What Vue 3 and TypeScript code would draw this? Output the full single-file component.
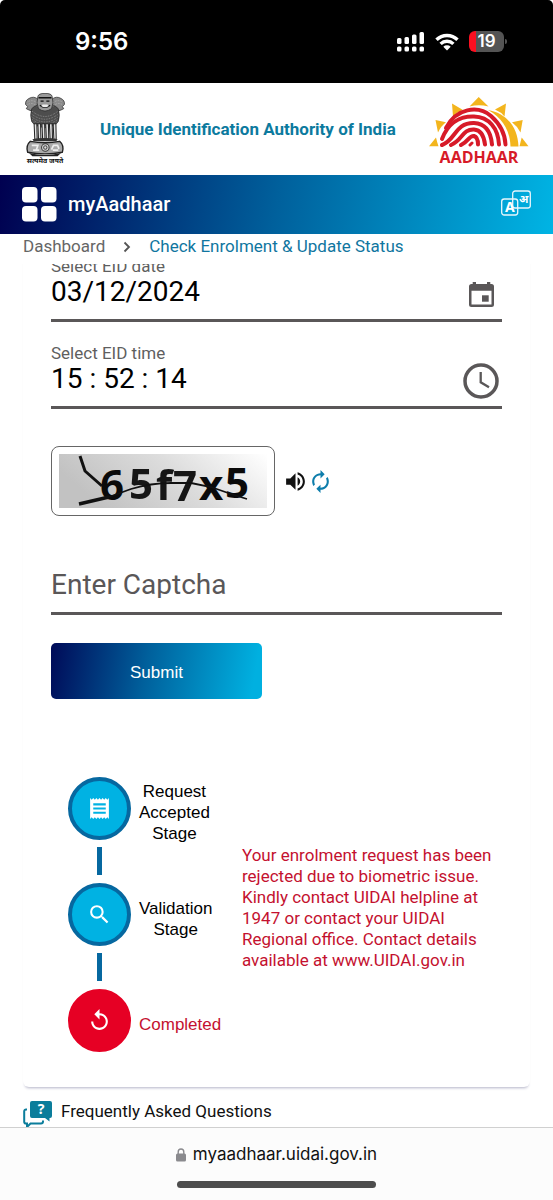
<script setup lang="ts">
import { ref } from 'vue'

interface Stage {
  label: string
  icon: 'receipt' | 'search' | 'replay'
  rejected: boolean
}

const eidDate = ref('03/12/2024')
const eidTime = ref('15 : 52 : 14')
const captcha = ref('')

const stages: Stage[] = [
  { label: 'Request Accepted Stage', icon: 'receipt', rejected: false },
  { label: 'Validation Stage', icon: 'search', rejected: false },
  { label: 'Completed', icon: 'replay', rejected: true },
]

const stagePaths: Record<Stage['icon'], string> = {
  receipt:
    'M18 17H6v-2h12v2zm0-4H6v-2h12v2zm0-4H6V7h12v2zM3 22l1.5-1.5L6 22l1.5-1.5L9 22l1.5-1.5L12 22l1.5-1.5L15 22l1.5-1.5L18 22l1.5-1.5L21 22V2l-1.5 1.5L18 2l-1.5 1.5L15 2l-1.5 1.5L12 2l-1.5 1.5L9 2 7.5 3.5 6 2 4.500 3.500 3 2v20z',
  search:
    'M15.500 14h-.79l-.28-.27A6.471 6.471 0 0 0 16 9.500 6.500 6.500 0 1 0 9.500 16c1.610 0 3.090-.59 4.230-1.570l.27.28v.79l5 4.990L20.490 19l-4.990-5zm-6 0C7.010 14 5 11.990 5 9.500S7.010 5 9.500 5 14 7.010 14 9.500 11.990 14 9.500 14z',
  replay:
    'M12 5V1L7 6l5 5V7c3.310 0 6 2.690 6 6s-2.690 6-6 6-6-2.690-6-6H4c0 4.420 3.580 8 8 8s8-3.580 8-8-3.580-8-8-8z',
}

const captchaGlyphs = [
  { char: '6', x: 41, y: 46, soft: false },
  { char: '5', x: 70, y: 45, soft: true },
  { char: 'f', x: 97, y: 46, soft: true },
  { char: '7', x: 114, y: 47, soft: true },
  { char: 'x', x: 140, y: 46, soft: false },
  { char: '5', x: 166, y: 44, soft: false },
]

const emblemLegs = [33, 44, 56, 67, 78, 89]
</script>

<template>
  <div class="page">
    <div class="status-bar">
      <span class="clock">9:56</span>
      <div class="indicators">
        <svg class="signal" viewBox="0 0 28 20" aria-hidden="true">
          <g fill="#fff">
            <rect x="0" y="6" width="4.500" height="6" rx="1.500" />
            <rect x="7.500" y="5" width="4.500" height="7" rx="1.500" />
            <rect x="15" y="2.500" width="4.500" height="9.500" rx="1.500" />
            <rect x="22.500" y="0" width="4.500" height="12" rx="1.500" />
            <rect x="0" y="14.500" width="4.500" height="5" rx="1.500" />
            <rect x="7.500" y="14.500" width="4.500" height="5" rx="1.500" />
            <rect x="15" y="14.500" width="4.500" height="5" rx="1.500" />
            <rect x="22.500" y="14.500" width="4.500" height="5" rx="1.500" />
          </g>
        </svg>
        <svg class="wifi" viewBox="0 0 24 18" aria-hidden="true">
          <g fill="none" stroke="#fff" stroke-width="3.400">
            <path d="M1.500 6.800 a15 15 0 0 1 21 0" />
            <path d="M5.600 10.900 a9.200 9.200 0 0 1 12.800 0" />
          </g>
          <path d="M8.300 13.700 a5.400 5.400 0 0 1 7.400 0 L12 17.600z" fill="#fff" />
        </svg>
        <span class="battery">19</span>
      </div>
    </div>

    <header class="brand">
      <div class="emblem">
        <svg viewBox="0 0 122 188" aria-hidden="true">
          <g fill="#4d4d4d" stroke="#222" stroke-width="2">
            <path d="M4 34 Q2 22 14 16 Q28 8 40 18 L40 50 Q26 58 14 50 L6 46 L10 40z" fill="#8a8a8a" />
            <path d="M118 34 Q120 22 108 16 Q94 8 82 18 L82 50 Q96 58 108 50 L116 46 L112 40z" fill="#8a8a8a" />
            <path d="M22 46 Q16 66 22 84 Q30 98 61 102 Q92 98 100 84 Q106 66 100 46 Q84 30 61 32 Q38 30 22 46z" />
            <path d="M40 10 Q42 1 61 1 Q80 1 82 10 Q88 30 80 46 Q61 60 42 46 Q34 30 40 10z" fill="#999" />
          </g>
          <g fill="none" stroke="#ddd" stroke-width="1.500" stroke-dasharray="2 3">
            <path d="M24 54 Q61 84 98 54 M22 62 Q61 92 100 62 M22 70 Q61 100 100 70 M24 78 Q61 106 98 78 M28 86 Q61 110 94 86" />
            <path d="M10 26 Q24 18 36 28 M10 34 Q24 26 36 38 M86 28 Q98 18 112 26 M86 38 Q98 26 112 34" />
          </g>
          <path d="M42 14h38M48 24h9M65 24h9M46 36 Q61 48 76 36" fill="none" stroke="#111" stroke-width="4" />
          <path d="M50 38 Q61 46 72 38 L68 34 H54z" fill="#eee" />
          <g fill="#e2e2e2" stroke="#222" stroke-width="3">
            <path v-for="x in emblemLegs" :key="x" :d="`M${x - 4} 90 L${x - 2} 136 H${x + 5} L${x + 4} 90z`" />
          </g>
          <path d="M24 136 Q61 128 98 136 L94 142 H28z" fill="#333" />
          <path d="M18 142 Q61 150 104 142 Q118 154 112 174 Q61 184 10 174 Q4 154 18 142z" fill="#aaa" stroke="#222" stroke-width="4" />
          <circle cx="62" cy="160" r="11" fill="#ddd" stroke="#333" stroke-width="3" />
          <circle cx="62" cy="160" r="5" fill="none" stroke="#444" stroke-width="3" />
          <path d="M22 154h18l-4 12M26 168h18M80 166l6-12h12l4 10M84 168h16" fill="none" stroke="#eee" stroke-width="5" />
          <path d="M14 176 Q61 188 108 176 L98 186 H24z" fill="#222" />
        </svg>
        <span class="motto" lang="hi">सत्यमेव जयते</span>
      </div>
      <h1>Unique Identification Authority of India</h1>
      <div class="aadhaar">
        <svg viewBox="0 0 100 50" aria-hidden="true">
          <g fill="#f3b51d">
            <path d="M40.500 9.500 L49.700 0 L59.500 9.500 Q50 7 40.500 9.500z" />
            <path d="M23 6.500 L34 13 Q28 15 24 19.500z" />
            <path d="M77 6.500 L66 12.500 Q72 15 75.500 19.500z" />
            <path d="M6.500 23 L17 25.300 Q12 29 9 35.500z" />
            <path d="M93.700 23 L83 25.300 Q88 29 91.500 35.500z" />
            <path d="M0 49.300 L7 40.500 Q8 45 9.500 49.300z" />
            <path d="M99.500 49.300 L92.700 40.500 Q91.500 45 90.500 49.300z" />
            <path d="M59 13 C77 16 89 30 89.500 49.500 H81.500 C81 34 74 21 59 13z" />
          </g>
          <g fill="none" stroke="#d71a28" stroke-width="4" stroke-linecap="round">
            <path d="M17 31 C27 11 49 8 62 19 C71 27 76 36 76.500 47.500" />
            <path d="M13 42 C19 26 31 19 45 19.500 C60 20 69 31 70 47.500" />
            <path d="M13 48 C27 43 26 25.500 45 26 C57 26.500 62 36 63 47.500" />
            <path d="M22 48 C34 43 33 32 45 32.500 C52 33 55 39 56 47.500" />
            <path d="M32 48 C40 44 40 38.500 45 39 C48 40 49 43 49 47.500" />
            <path d="M41 48 L43 46" stroke-width="3" />
          </g>
        </svg>
        <span>AADHAAR</span>
      </div>
    </header>

    <nav class="navbar">
      <a class="home" href="#">
        <svg viewBox="0 0 35 35" aria-hidden="true">
          <g fill="#fff">
            <rect width="15.500" height="15.500" rx="4" />
            <rect x="19" width="15.500" height="15.500" rx="4" />
            <rect y="19" width="15.500" height="15.500" rx="4" />
            <rect x="19" y="19" width="15.500" height="15.500" rx="4" />
          </g>
        </svg>
        <span>myAadhaar</span>
      </a>
      <button class="language" type="button" aria-label="Change language">
        <svg viewBox="0 0 30 26" aria-hidden="true">
          <g fill="none" stroke="#e8f6fc" stroke-width="1.300">
            <rect x="11.700" y="1" width="17.600" height="17" rx="2.500" />
            <rect x="0.700" y="9" width="16" height="16" rx="2.500" />
          </g>
          <text x="4" y="21.500" class="latin">A</text>
          <text x="18" y="13" class="hindi">अ</text>
        </svg>
      </button>
    </nav>

    <nav class="crumbs" aria-label="Breadcrumb">
      <a href="#">Dashboard</a>
      <svg viewBox="0 0 8 12" aria-hidden="true">
        <path d="M1.500 1.500 L6 6 L1.500 10.500" fill="none" stroke="#555" stroke-width="1.800" />
      </svg>
      <a class="current" href="#" aria-current="page">Check Enrolment &amp; Update Status</a>
    </nav>

    <main>
      <section class="card">
        <form @submit.prevent>
          <div class="field">
            <label for="eid-date">Select EID date</label>
            <div class="control">
              <input id="eid-date" v-model="eidDate" type="text" />
              <button type="button" aria-label="Open calendar">
                <svg class="calendar" viewBox="0 0 25 25" aria-hidden="true">
                  <path
                    fill="#5a5758"
                    fill-rule="evenodd"
                    d="M3.700 0h3.300v2h11V0h3.300v2H22.500a2.500 2.500 0 0 1 2.500 2.500v18a2.500 2.500 0 0 1-2.500 2.500h-20A2.500 2.500 0 0 1 0 22.500v-18A2.500 2.500 0 0 1 2.500 2h1.200zM2.500 8.800v13.700h20V8.800z"
                  />
                  <rect x="13" y="13.300" width="6.700" height="6.400" fill="#5a5758" />
                </svg>
              </button>
            </div>
          </div>

          <div class="field">
            <label for="eid-time">Select EID time</label>
            <div class="control">
              <input id="eid-time" v-model="eidTime" type="text" />
              <button type="button" aria-label="Open time picker">
                <svg class="dial" viewBox="0 0 36 36" aria-hidden="true">
                  <circle cx="18" cy="18" r="16" fill="none" stroke="#5a5758" stroke-width="3.500" />
                  <path d="M17.700 9v10.300l8.300 5" fill="none" stroke="#5a5758" stroke-width="2.300" />
                </svg>
              </button>
            </div>
          </div>

          <div class="challenge">
            <div class="challenge-frame">
              <svg viewBox="0 0 208 54" role="img" aria-label="Captcha image">
                <defs>
                  <linearGradient id="captcha-fade" x1="0" y1="0.300" x2="1" y2="0">
                    <stop offset="0" stop-color="#c2c2c2" />
                    <stop offset="0.500" stop-color="#dcdcdc" />
                    <stop offset="1" stop-color="#fff" />
                  </linearGradient>
                </defs>
                <rect width="208" height="54" fill="url(#captcha-fade)" />
                <text
                  v-for="(glyph, index) in captchaGlyphs"
                  :key="index"
                  :x="glyph.x"
                  :y="glyph.y"
                  :class="{ soft: glyph.soft }"
                >{{ glyph.char }}</text>
                <g fill="none" stroke="#111">
                  <path d="M21 2 L26 17 L43 32" stroke-width="3" />
                  <path d="M20 50 L50 43" stroke-width="3.500" />
                  <path d="M50 43 L72 35 Q92 29 112 29 L132 29 L152 33 L172 40 L188 45" stroke-width="1.800" />
                </g>
              </svg>
            </div>
            <button type="button" aria-label="Play captcha audio">
              <svg viewBox="0 0 24 24" aria-hidden="true">
                <path
                  fill="#111"
                  d="M3 9v6h4l5 5V4L7 9H3zm13.500 3c0-1.770-1.020-3.290-2.500-4.030v8.050c1.480-.73 2.500-2.250 2.500-4.020zM14 3.230v2.060c2.890.86 5 3.540 5 6.710s-2.110 5.850-5 6.710v2.060c4.010-.91 7-4.490 7-8.770s-2.990-7.860-7-8.770z"
                />
              </svg>
            </button>
            <button type="button" aria-label="Refresh captcha">
              <svg viewBox="0 0 24 24" aria-hidden="true">
                <path
                  fill="#0d7dab"
                  d="M12 6v3l4-4-4-4v3c-4.420 0-8 3.580-8 8 0 1.570.46 3.030 1.240 4.260L6.700 14.800A5.870 5.870 0 0 1 6 12c0-3.310 2.690-6 6-6zm6.760 1.740L17.300 9.200c.44.84.7 1.790.7 2.800 0 3.310-2.690 6-6 6v-3l-4 4 4 4v-3c4.420 0 8-3.580 8-8 0-1.570-.46-3.030-1.240-4.260z"
                />
              </svg>
            </button>
          </div>

          <div class="control">
            <input v-model="captcha" type="text" placeholder="Enter Captcha" aria-label="Enter Captcha" />
          </div>

          <button class="submit" type="submit">Submit</button>
        </form>

        <div class="result">
          <ol class="stages">
            <li v-for="stage in stages" :key="stage.label" :class="{ rejected: stage.rejected }">
              <span class="badge">
                <svg viewBox="0 0 24 24" aria-hidden="true">
                  <path :d="stagePaths[stage.icon]" fill="#fff" />
                </svg>
              </span>
              <span class="stage-label">{{ stage.label }}</span>
            </li>
          </ol>
          <p>
            Your enrolment request has been rejected due to biometric issue. Kindly contact UIDAI helpline at
            1947 or contact your UIDAI Regional office. Contact details available at www.UIDAI.gov.in
          </p>
        </div>
      </section>

      <a class="faq" href="#">
        <svg viewBox="0 0 29 27" aria-hidden="true">
          <path d="M4 8.500H3a1.800 1.800 0 0 0-1.800 1.800v10.500A1.800 1.800 0 0 0 3 22.600h1V26l3.500-3.400H18a2 2 0 0 0 2-2V19.500" fill="none" stroke="#0b7d9b" stroke-width="2" />
          <path d="M9 0h18a2 2 0 0 1 2 2v13a2 2 0 0 1-2 2h-.5v3.500L22 17H9a2 2 0 0 1-2-2V2a2 2 0 0 1 2-2z" fill="#0b7d9b" />
          <text x="18" y="13">?</text>
        </svg>
        <span>Frequently Asked Questions</span>
      </a>
    </main>

    <footer>
      <div class="address">
        <svg viewBox="0 0 10 14" aria-hidden="true">
          <rect y="5.500" width="10" height="8" rx="1.500" fill="#8a8a8e" />
          <path d="M2.200 6V4a2.800 3 0 0 1 5.600 0v2" fill="none" stroke="#8a8a8e" stroke-width="1.400" />
        </svg>
        <span>myaadhaar.uidai.gov.in</span>
      </div>
      <div class="home-indicator"></div>
    </footer>
  </div>
</template>

<style>
body {
  margin: 0;
  background: #fff;
}
</style>

<style scoped>
.page {
  display: flex;
  flex-direction: column;
  min-height: 100vh;
  background: #fff;
  color: #111;
  font-family: Roboto, 'Noto Sans', sans-serif;
  font-size: 17px;
  line-height: 21px;
}

svg {
  display: block;
  flex: none;
}

a {
  color: inherit;
  text-decoration: none;
}

button {
  padding: 0;
  border: 0;
  background: none;
}

.status-bar {
  display: flex;
  align-items: center;
  justify-content: space-between;
  height: 83px;
  padding: 0 49px 0 75px;
  border-radius: 5px 5px 0 0;
  background: #000;
  color: #fff;
  font-family: Inter, sans-serif;
}

.clock {
  font-size: 24px;
  font-weight: 600;
}

.indicators {
  display: flex;
  align-items: center;
}

.signal {
  width: 28px;
  height: 20px;
  margin-right: 10px;
}

.wifi {
  width: 24px;
  height: 18px;
  margin-right: 10px;
}

.battery {
  position: relative;
  width: 35px;
  border-radius: 6px;
  background: linear-gradient(to right, #fb0f20 7px, #545454 7px);
  font-size: 17px;
  font-weight: 600;
  text-align: center;
}

.battery::after {
  content: '';
  position: absolute;
  top: 8px;
  right: -3px;
  width: 2px;
  height: 5px;
  border-radius: 0 2px 2px 0;
  background: #545454;
}

.brand {
  display: flex;
  align-items: center;
  height: 92px;
  padding: 0 24px;
}

.emblem {
  display: flex;
  flex-direction: column;
  align-items: center;
  width: 42px;
}

.emblem svg {
  width: 42px;
  height: 64px;
}

.motto {
  font-size: 7px;
  font-weight: 700;
  line-height: 8px;
  white-space: nowrap;
}

h1 {
  margin: 0 0 0 34px;
  color: #0c7a9e;
  font-size: 17px;
  font-weight: 700;
  line-height: 21px;
  white-space: nowrap;
}

.aadhaar {
  display: flex;
  flex-direction: column;
  align-items: center;
  gap: 2px;
  margin-left: auto;
  padding-top: 3px;
  color: #d71a28;
  font-family: 'Open Sans', 'Noto Sans', sans-serif;
  font-size: 16px;
  font-weight: 700;
  line-height: 16px;
}

.aadhaar svg {
  width: 100px;
  height: 50px;
}

.navbar {
  display: flex;
  align-items: center;
  justify-content: space-between;
  height: 59px;
  padding: 0 22px;
  background: linear-gradient(100deg, #000050, #00609c 50%, #00b4e4);
}

.home {
  display: flex;
  align-items: center;
  gap: 11px;
  color: #fff;
  font-size: 20px;
  font-weight: 500;
}

.home svg {
  width: 35px;
  height: 35px;
}

.language svg {
  width: 30px;
  height: 26px;
  margin-bottom: 4px;
}

.language text {
  fill: #fff;
  font-family: 'Noto Sans', sans-serif;
  font-weight: 700;
}

.language .latin {
  font-size: 14px;
}

.language .hindi {
  font-size: 11px;
}

.crumbs {
  display: flex;
  align-items: center;
  height: 25px;
  padding: 0 23px 5px;
  color: #666;
}

.crumbs svg {
  width: 8px;
  height: 12px;
  margin: 0 18px;
}

.current {
  color: #1076a0;
}

main {
  flex: 1;
  overflow: hidden;
  padding: 0 23px;
}

.card {
  margin-top: -7px;
  padding: 0 28px 35px;
  border-radius: 0 0 6px 6px;
  box-shadow: 0 3px 3px -2px #b4b4c8;
}

.field {
  margin-bottom: 22px;
}

label {
  display: block;
  padding-bottom: 2px;
  color: #5f5f5f;
  font-size: 17px;
  line-height: 18px;
}

.control {
  display: flex;
  align-items: flex-start;
  height: 30px;
  padding-bottom: 12px;
  border-bottom: 3px solid #5a5758;
}

.control input {
  flex: 1;
  min-width: 0;
  height: 28px;
  padding: 0;
  border: 0;
  outline: 0;
  background: none;
  color: #000;
  font: 28px Roboto, sans-serif;
}

.control input::placeholder {
  color: #5a5758;
  opacity: 1;
}

.control button {
  display: flex;
  align-items: center;
  justify-content: center;
  width: 36px;
  height: 34px;
  margin-right: 3px;
}

.calendar {
  width: 25px;
  height: 25px;
}

.dial {
  width: 36px;
  height: 36px;
}

.challenge {
  display: flex;
  align-items: center;
  margin: 37px 0 54px;
}

.challenge-frame {
  box-sizing: border-box;
  width: 224px;
  height: 70px;
  margin-right: 8px;
  padding: 7px;
  border: 1px solid #666;
  border-radius: 8px;
}

.challenge-frame svg {
  width: 100%;
  height: 100%;
  overflow: visible;
}

.challenge-frame text {
  fill: #0a0a0a;
  font: 700 42px 'Open Sans', sans-serif;
}

.challenge-frame .soft {
  fill: #161616;
  filter: blur(0.6px);
}

.challenge button svg {
  width: 25px;
  height: 25px;
}

.submit {
  display: block;
  width: 211px;
  height: 56px;
  margin-top: 28px;
  padding-top: 3px;
  border-radius: 5px;
  background: linear-gradient(100deg, #000a58, #00609c 45%, #00b0e0 95%);
  color: #fff;
  font: 17px 'Liberation Sans', sans-serif;
}

.result {
  display: flex;
  align-items: center;
  gap: 20px;
  margin-top: 78px;
  padding-left: 17px;
}

.stages {
  flex: none;
  width: 154px;
  margin: 0;
  padding: 0;
  list-style: none;
  font-family: 'Liberation Sans', sans-serif;
}

.stages li {
  position: relative;
  display: flex;
  align-items: center;
  gap: 8px;
  height: 63px;
}

.stages li + li {
  margin-top: 43px;
}

.stages li + li::before {
  content: '';
  position: absolute;
  top: -36px;
  left: 29px;
  width: 5px;
  height: 28px;
  background: #0668a0;
}

.badge {
  box-sizing: border-box;
  display: flex;
  flex: none;
  align-items: center;
  justify-content: center;
  width: 63px;
  height: 63px;
  border: 4px solid #0668a0;
  border-radius: 50%;
  background: #00b2e3;
}

.badge svg {
  width: 25px;
  height: 25px;
}

.stage-label {
  width: min-content;
  padding-top: 8px;
  color: #000;
  text-align: center;
}

.rejected .badge {
  border-color: #e60024;
  background: #e60024;
}

.rejected .stage-label {
  color: #c4112f;
}

.result p {
  max-width: 264px;
  margin: 0 0 13px;
  color: #c4112f;
}

.faq {
  display: flex;
  align-items: flex-start;
  gap: 9px;
  height: 26px;
  margin-top: 14px;
}

.faq svg {
  width: 29px;
  height: 27px;
}

.faq text {
  fill: #fff;
  font: 700 14px 'Noto Sans', sans-serif;
  text-anchor: middle;
}

footer {
  display: flex;
  flex-direction: column;
  align-items: center;
  padding: 16px 0 12px;
  border-top: 1px solid #d0d0d0;
  background: #fcfcfc;
}

.address {
  display: flex;
  align-items: center;
  gap: 7px;
  margin-bottom: 16px;
  font-family: Inter, sans-serif;
}

.address svg {
  width: 10px;
  height: 14px;
}

.home-indicator {
  width: 36%;
  height: 7px;
  border-radius: 4px;
  background: #4d4d4d;
}
</style>
